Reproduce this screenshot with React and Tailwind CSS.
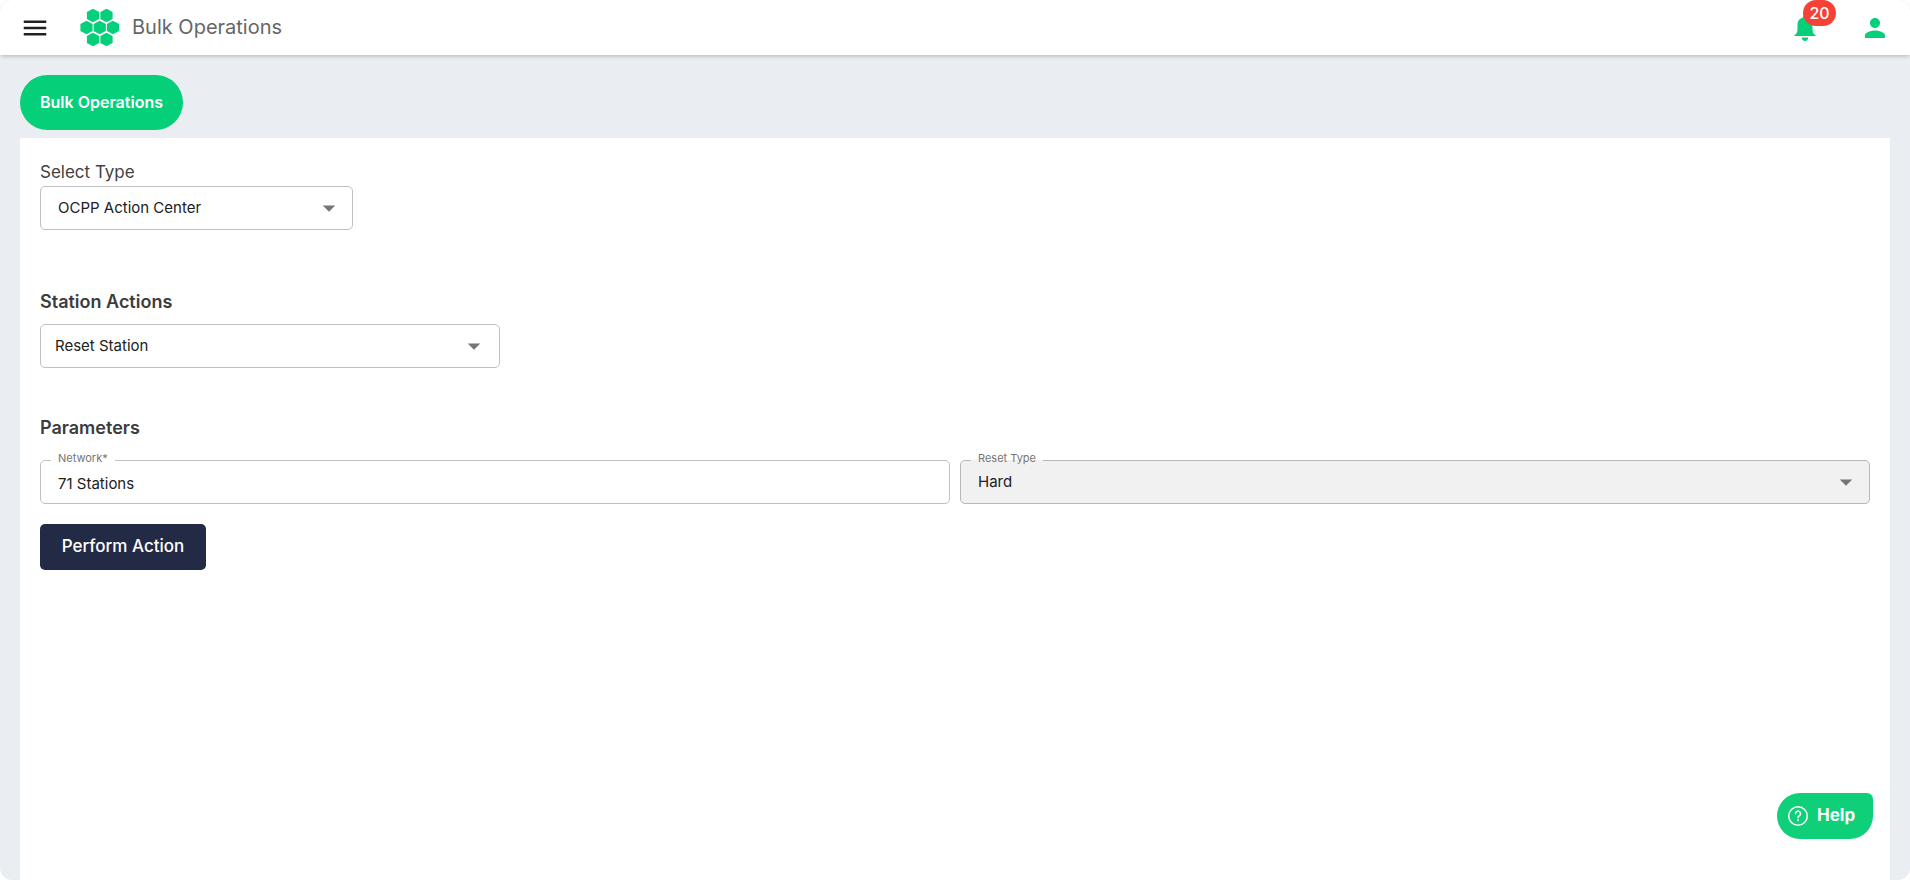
import { useState } from 'react'
import { MdArrowDropDown, MdMenu, MdPerson } from 'react-icons/md'

const HEXES = [
  [13, 6.5], [26.5, 6.5],
  [6.5, 18.5], [19.75, 18.5], [33, 18.5],
  [13, 30.5], [26.5, 30.5],
]

function hexPoints(cx, cy) {
  return [[0, -6.8], [6.1, -3.4], [6.1, 3.4], [0, 6.8], [-6.1, 3.4], [-6.1, -3.4]]
    .map(([x, y]) => `${cx + x},${cy + y}`)
    .join(' ')
}

function Logo() {
  return (
    <svg width="40" height="38" viewBox="0 0 40 38" fill="#05cf79" aria-hidden="true">
      {HEXES.map(([x, y]) => <polygon key={`${x}-${y}`} points={hexPoints(x, y)} />)}
    </svg>
  )
}

function BellIcon() {
  return (
    <svg width="24" height="28" viewBox="0 0 24 28" fill="#05cf79" aria-hidden="true">
      <path d="M12 1.500c1.200 0 2 .8 2 1.900 3.400.9 5.500 3.600 5.500 7.200V15c0 3 .8 5 3.300 6.500v.5H1.200v-.5C3.700 20 4.500 18 4.500 15v-4.400c0-3.600 2.100-6.300 5.500-7.200 0-1.100.8-1.900 2-1.900z" />
      <path d="M8.800 23.600h6.400c0 2-1.400 3.400-3.200 3.400s-3.200-1.400-3.200-3.400z" />
    </svg>
  )
}

function Arrow({ className }) {
  return <MdArrowDropDown size={30} className={`pointer-events-none absolute text-[#757575] ${className}`} />
}

export default function App() {
  const [type, setType] = useState('OCPP Action Center')
  const [action, setAction] = useState('Reset Station')
  const [network, setNetwork] = useState('71 Stations')
  const [reset, setReset] = useState('Hard')

  return (
    <div className="flex min-h-screen flex-col rounded-xl bg-[#eaeef3] font-['Inter',sans-serif] text-[#212121]">
      <header className="flex h-[55px] items-center rounded-t-xl bg-white px-5 shadow-[0_2px_4px_-1px_rgba(0,0,0,0.25)]">
        <button type="button" aria-label="Menu" className="text-[#212121]">
          <MdMenu size={30} />
        </button>
        <div className="ml-[30px] flex items-center gap-3">
          <Logo />
          <h1 className="pb-0.5 text-xl text-[#666]">Bulk Operations</h1>
        </div>
        <div className="ml-auto flex items-center gap-[43px]">
          <button type="button" aria-label="Notifications" className="relative">
            <BellIcon />
            <span className="absolute -top-3.5 left-2.5 flex h-[26px] w-[33px] items-center justify-center rounded-full bg-[#f44336] text-base font-medium text-white">20</span>
          </button>
          <button type="button" aria-label="Account" className="text-[#05cf79]">
            <MdPerson size={30} />
          </button>
        </div>
      </header>

      <main className="flex flex-1 flex-col px-5 pt-5">
        <nav>
          <button type="button" className="h-[55px] rounded-full bg-[#05cf79] px-5 pb-0.5 text-base font-semibold text-white">
            Bulk Operations
          </button>
        </nav>

        <section className="mt-2 flex flex-1 flex-col items-start bg-white px-5 pt-5">
          <label htmlFor="type" className="text-[17px] leading-7 text-[#424242]">Select Type</label>
          <div className="relative w-[313px]">
            <select id="type" value={type} onChange={e => setType(e.target.value)}
              className="h-11 w-full appearance-none rounded-[5px] border border-[#c0c0c0] bg-white px-[17px] text-[15px]">
              <option>OCPP Action Center</option>
            </select>
            <Arrow className="top-1/2 right-[9px] -translate-y-1/2" />
          </div>

          <h2 className="mt-[58px] text-lg font-semibold text-[#3c3c3c]">
            <label htmlFor="action">Station Actions</label>
          </h2>
          <div className="relative mt-2 w-[460px]">
            <select id="action" value={action} onChange={e => setAction(e.target.value)}
              className="h-11 w-full appearance-none rounded-[5px] border border-[#c0c0c0] bg-white px-3.5 text-[15px]">
              <option>Reset Station</option>
            </select>
            <Arrow className="top-1/2 right-[11px] -translate-y-1/2" />
          </div>

          <h2 className="mt-[46px] text-lg font-semibold text-[#3c3c3c]">Parameters</h2>
          <div className="mt-2 flex w-full gap-2.5">
            <fieldset className="min-w-0 flex-1 rounded-[5px] border border-[#c0c0c0]">
              <legend className="ml-2.5 px-[7px] pb-1 text-[11px] leading-4 text-[#757575]">
                <label htmlFor="network">Network*</label>
              </legend>
              <input id="network" value={network} onChange={e => setNetwork(e.target.value)}
                className="block h-[33px] w-full bg-transparent px-[17px] pb-1.5 text-[15px] outline-none" />
            </fieldset>
            <fieldset className="min-w-0 flex-1 rounded-[5px] border border-[#b8b8b8] bg-[#f1f1f1]">
              <legend className="ml-2.5 px-[7px] pb-1 text-[11px] leading-4 text-[#757575]">
                <label htmlFor="reset">Reset Type</label>
              </legend>
              <div className="relative">
                <select id="reset" value={reset} onChange={e => setReset(e.target.value)}
                  className="block h-[33px] w-full appearance-none bg-transparent px-[17px] pb-2 text-[15px] outline-none">
                  <option>Hard</option>
                </select>
                <Arrow className="right-2 bottom-1.5" />
              </div>
            </fieldset>
          </div>

          <button type="button" className="mt-5 h-[46px] w-[166px] rounded-[5px] bg-[#232a45] text-[17px] font-medium text-white">
            Perform Action
          </button>
        </section>
      </main>

      <button type="button" className="fixed right-[37px] bottom-[41px] flex h-[46px] w-24 items-center gap-2 rounded-[23px] rounded-tr-md bg-[#0fd079] pl-2.5 text-[17px] font-bold text-white">
        <svg width="22" height="22" viewBox="0 0 22 22" fill="none" stroke="currentColor" strokeWidth="1.5" aria-hidden="true">
          <circle cx="11" cy="11" r="9.300" />
          <path d="M8.500 8.700a2.500 2.500 0 1 1 3.900 2c-.9.600-1.400 1-1.400 2" strokeLinecap="round" />
          <circle cx="11" cy="15.200" r="1" fill="currentColor" stroke="none" />
        </svg>
        Help
      </button>
    </div>
  )
}
